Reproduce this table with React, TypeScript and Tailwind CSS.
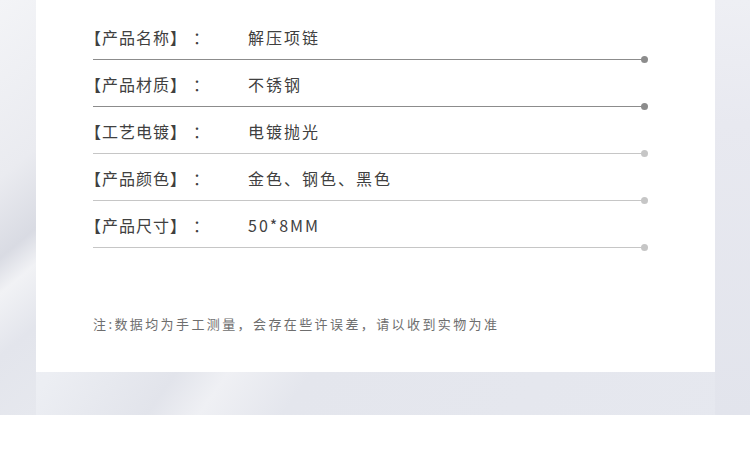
const rows = [
  { label: "【产品名称】", value: "解压项链", dark: true },
  { label: "【产品材质】", value: "不锈钢", dark: true },
  { label: "【工艺电镀】", value: "电镀抛光", dark: false },
  { label: "【产品颜色】", value: "金色、钢色、黑色", dark: false },
  { label: "【产品尺寸】", value: "50*8MM", dark: false },
];

function SpecRow({ label, value, dark }: { label: string; value: string; dark: boolean }) {
  return (
    <div className="flex flex-col">
      <div className="flex pt-[12px] pb-[10px] text-[16px] leading-[24px] text-[#404040]">
        <span className="-ml-[8px] flex w-[163px] shrink-0 tracking-[1px]">
          {label}
          <span className="ml-[6px]">：</span>
        </span>
        <span className="tracking-[2px]">{value}</span>
      </div>
      <div className="flex h-px w-[555px] items-center">
        <div className={`h-px flex-1 ${dark ? "bg-[#8c8c8c]" : "bg-[#c6c6c6]"}`} />
        <div className={`-ml-[3px] size-[7px] shrink-0 rounded-full ${dark ? "bg-[#8c8c8c]" : "bg-[#c6c6c6]"}`} />
      </div>
    </div>
  );
}

export default function App() {
  return (
    <div className="h-[461px] w-[750px] overflow-hidden bg-white font-['Noto_Sans_CJK_SC','Noto_Sans',sans-serif]">
      <div className="flex h-[415px] bg-[linear-gradient(125deg,#f4f5f8_0%,#eceef3_30%,#e2e4eb_42%,#eff0f4_47%,#e4e6ed_55%,#e6e8ef_100%)]">
        <div className="w-[36px] shrink-0 bg-[linear-gradient(140deg,#f3f4f7_0%,#eaebf0_40%,#d9dbe3_58%,#f1f2f5_66%,#e3e5ec_80%,#e6e8ee_100%)]" />
        <div className="flex h-[372px] w-[679px] shrink-0 flex-col bg-white pt-[13px] pl-[57px]">
          {rows.map((r) => (
            <SpecRow key={r.label} {...r} />
          ))}
          <p className="mt-[66px] text-[13px] leading-[20px] tracking-[2.4px] text-[#6e6e6e]">
            注:数据均为手工测量，会存在些许误差，请以收到实物为准
          </p>
        </div>
        <div className="flex-1 bg-[linear-gradient(180deg,#eeeff4_0%,#e8e9f0_30%,#e2e4ec_100%)]" />
      </div>
    </div>
  );
}
